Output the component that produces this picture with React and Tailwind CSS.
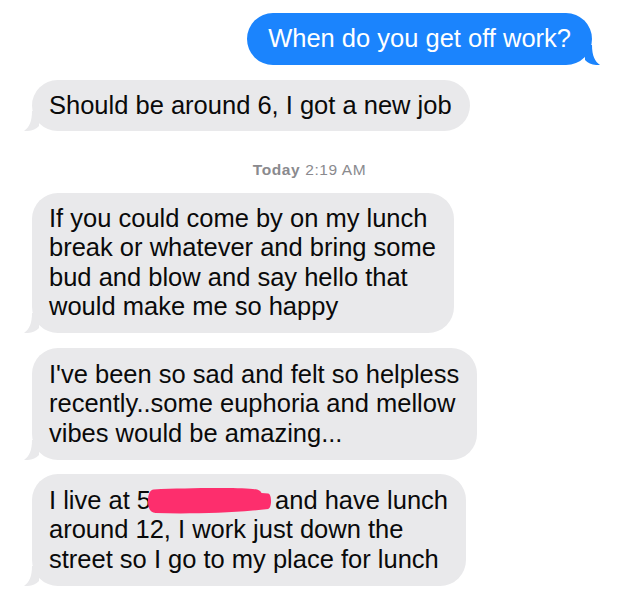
import React from 'react';

const font = { fontFamily: '"Liberation Sans", Arial, sans-serif' };

const Tail = ({ side, color }) => (
    <svg
        className={side === 'left' ? 'absolute left-[-8px] bottom-0' : 'absolute right-[-8px] bottom-0 -scale-x-100'}
        width="22"
        height="20"
        viewBox="0 0 22 20"
    >
        <path d="M8 0 C8 11 5 16.5 0 20 C6.5 20.5 11.5 18.5 15 15 L15 0 Z" fill={color} />
    </svg>
);

const Received = ({ lines, className = '' }) => (
    <div className={`relative self-start ml-[32px] bg-[#e9e9eb] rounded-[26px] pl-[17px] pr-[18px] text-[25.5px] leading-[29.5px] text-[#0a0a0a] ${className}`}>
        {lines.map((l, i) => (
            <div key={i} className="relative z-10 whitespace-nowrap">{l}</div>
        ))}
        <Tail side="left" color="#e9e9eb" />
    </div>
);

// pink marker scribble hiding the address
const Redaction = () => (
    <svg className="inline-block align-top mt-[2px] ml-[-3px] mr-[3px]" width="124" height="26" viewBox="0 0 130 26" preserveAspectRatio="none">
        <path
            d="M6 1.5 C40 0 90 -0.5 110 1 C116 1.5 118 3 119 5 L126 5.5 C130 6 130 20 126 21 L110 22.5 C80 25 40 26 8 25 C2 24.5 0 20 0 13 C0 6 2 2 6 1.5 Z"
            fill="#fd2e6d"
        />
    </svg>
);

export default function App() {
    return (
        <div className="w-[619px] h-[608px] bg-white overflow-hidden flex flex-col pt-[13px]" style={font}>
            <div className="relative self-end mr-[27px] bg-[#1b84fd] rounded-[26px] px-[21px] py-[11px] text-[25.5px] leading-[29.5px] text-white">
                <div className="relative z-10 whitespace-nowrap">When do you get off work?</div>
                <Tail side="right" color="#1b84fd" />
            </div>

            <Received className="mt-[15px] py-[11px]" lines={['Should be around 6, I got a new job']} />

            <div className="mt-[29.5px] mb-[14px] text-center text-[15.5px] leading-[18px] tracking-[0.6px] text-[#8a8a8e]">
                <span className="font-bold">Today</span> 2:19 AM
            </div>

            <Received
                className="py-[11px]"
                lines={[
                    'If you could come by on my lunch',
                    'break or whatever and bring some',
                    'bud and blow and say hello that',
                    'would make me so happy',
                ]}
            />

            <Received
                className="mt-[15px] py-[12px]"
                lines={[
                    "I've been so sad and felt so helpless",
                    'recently..some euphoria and mellow',
                    'vibes would be amazing...',
                ]}
            />

            <Received
                className="mt-[14px] py-[11.5px]"
                lines={[
                    <span key="a">
                        I live at 5<Redaction />and have lunch
                    </span>,
                    'around 12, I work just down the',
                    'street so I go to my place for lunch',
                ]}
            />
        </div>
    );
}
